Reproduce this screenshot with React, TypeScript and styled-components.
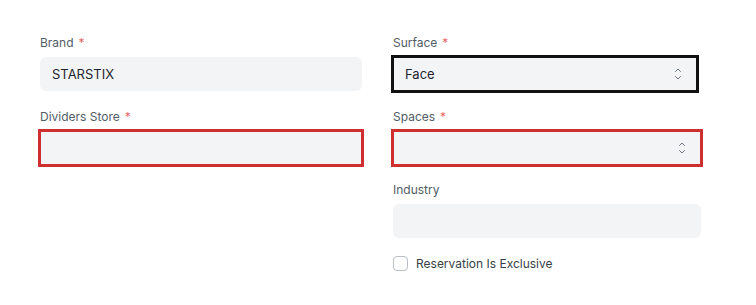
import React from 'react';
import styled, { createGlobalStyle, css } from 'styled-components';

const GlobalStyle = createGlobalStyle`
  html, body {
    margin: 0;
    padding: 0;
    background: #ffffff;
    font-family: Inter, "Noto Sans", "Liberation Sans", sans-serif;
  }
`;

const Page = styled.div`
  display: grid;
  grid-template-columns: 322px 308px;
  column-gap: 31px;
  padding: 34px 0 0 40px;
`;

const Column = styled.div`
  display: flex;
  flex-direction: column;
`;

const Field = styled.div`
  display: flex;
  flex-direction: column;
  gap: 6px;
  margin-bottom: 16.5px;
`;

const Label = styled.label`
  font-size: 12px;
  line-height: 17px;
  color: #525c66;
`;

const Required = styled.span`
  color: #e86a6a;
  margin-left: 5px;
`;

type Mark = 'red' | 'black' | undefined;

const Box = styled.div<{ $mark?: Mark }>`
  position: relative;
  box-sizing: border-box;
  height: 34px;
  display: flex;
  align-items: center;
  padding: 0 12px;
  background: #f3f4f6;
  border-radius: 6px;
  font-size: 13px;
  color: #1f272e;
  ${(p) =>
    p.$mark &&
    css`
      border-radius: 0;
      outline: 3px solid ${p.$mark === 'red' ? '#cf2f2f' : '#111111'};
      outline-offset: -1px;
    `}
  ${(p) =>
    p.$mark === 'black' &&
    css`
      margin-right: 4px;
    `}
`;

const SelectIcon = styled.svg`
  position: absolute;
  right: 14px;
  top: 10px;
`;

const CheckRow = styled.div`
  display: flex;
  align-items: center;
  gap: 8px;
  margin-top: 1px;
`;

const CheckBox = styled.span`
  box-sizing: border-box;
  width: 15px;
  height: 15px;
  border: 1px solid #b8bfc6;
  border-radius: 4px;
  background: #fff;
`;

const CheckLabel = styled.span`
  font-size: 12px;
  line-height: 16px;
  color: #383f47;
`;

const Chevrons = () => (
  <SelectIcon width="10" height="14" viewBox="0 0 10 14" fill="none">
    <path d="M2.5 4.5 L5 2 L7.5 4.5" stroke="#6b7580" strokeWidth="1" strokeLinecap="round" strokeLinejoin="round" />
    <path d="M2.5 9.5 L5 12 L7.5 9.5" stroke="#6b7580" strokeWidth="1" strokeLinecap="round" strokeLinejoin="round" />
  </SelectIcon>
);

export default function App() {
  return (
    <>
      <GlobalStyle />
      <Page>
        <Column>
          <Field>
            <Label>
              Brand<Required>*</Required>
            </Label>
            <Box>STARSTIX</Box>
          </Field>
          <Field>
            <Label>
              Dividers Store<Required>*</Required>
            </Label>
            <Box $mark="red" />
          </Field>
        </Column>
        <Column>
          <Field>
            <Label>
              Surface<Required>*</Required>
            </Label>
            <Box $mark="black">
              Face
              <Chevrons />
            </Box>
          </Field>
          <Field>
            <Label>
              Spaces<Required>*</Required>
            </Label>
            <Box $mark="red">
              <Chevrons />
            </Box>
          </Field>
          <Field>
            <Label>Industry</Label>
            <Box />
          </Field>
          <CheckRow>
            <CheckBox />
            <CheckLabel>Reservation Is Exclusive</CheckLabel>
          </CheckRow>
        </Column>
      </Page>
    </>
  );
}
